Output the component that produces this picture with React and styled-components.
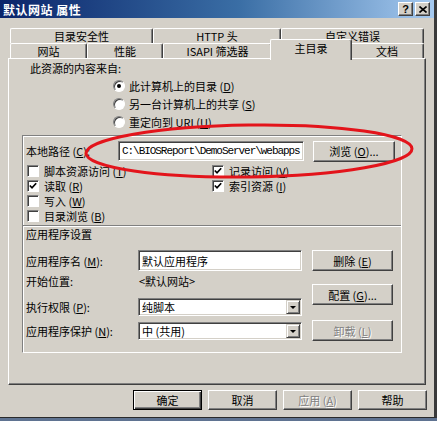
import React from 'react';
import styled, { createGlobalStyle } from 'styled-components';

const GlobalStyle = createGlobalStyle`
  html, body { margin:0; padding:0; background:#5f7391; }
  body {
    font-family: "Noto Sans CJK SC", "Liberation Sans", sans-serif;
    font-size:11px;
    color:#000;
  }
  * { box-sizing:border-box; }
`

const Window = styled.div`
  position:relative;
  width:437px;
  height:418px;
  background:#d4d0c8;
  border-right:3px solid #3a3a3a;
  border-bottom:1px solid #2a2a2a;
  display:flex;
  flex-direction:column;
`

const TitleBar = styled.div`
  height:18px;
  display:flex;
  align-items:center;
  justify-content:space-between;
  padding:0 4px 0 3px;
  background:linear-gradient(90deg, #0a246a 0%, #3a6ea5 55%, #a6caf0 100%);
`

const TitleText = styled.div`
  color:#fff;
  font-weight:bold;
  font-size:12px;
  letter-spacing:0.5px;
`

const TitleButtons = styled.div`
  display:flex;
  gap:2px;
`

const CaptionButton = styled.div`
  width:15px;
  height:14px;
  background:#d4d0c8;
  border:1px solid;
  border-color:#fff #404040 #404040 #fff;
  box-shadow:inset -1px -1px #808080;
  display:flex;
  align-items:center;
  justify-content:center;
  font-family:"Liberation Sans", sans-serif;
  font-weight:bold;
  font-size:11px;
  line-height:1;
`

const Body = styled.div`
  flex:1;
  display:flex;
  flex-direction:column;
  padding:10px 8px 0 8px;
`

const TabStrip = styled.div`
  display:flex;
  flex-direction:column;
  padding:0 2px;
`

const TabRow = styled.div`
  display:flex;
  align-items:flex-start;
  height:15px;
`

const Tab = styled.div`
  width:${p => p.w}px;
  height:${p => (p.active ? 21 : 15)}px;
  margin:${p => (p.active ? '-4px -2px -2px -2px' : '0')};
  position:relative;
  z-index:${p => (p.active ? 2 : 1)};
  background:#d4d0c8;
  border-top:1px solid #fff;
  border-left:1px solid #fff;
  border-right:1px solid #404040;
  box-shadow:inset -1px 0 #808080;
  border-radius:2px 2px 0 0;
  display:flex;
  align-items:${p => (p.active ? 'flex-start' : 'center')};
  padding-top:${p => (p.active ? '2px' : '0')};
  justify-content:center;
  white-space:nowrap;
  line-height:13px;
`

const Panel = styled.div`
  height:327px;
  border:1px solid;
  border-color:#fff #404040 #404040 #fff;
  box-shadow:inset -1px -1px #808080;
  padding:2px 0 0 0;
  display:flex;
  flex-direction:column;
`

const Caption = styled.div`
  height:14px;
  line-height:14px;
  padding-left:${p => p.indent || 0}px;
  white-space:nowrap;
`

const RadioList = styled.div`
  display:flex;
  flex-direction:column;
  margin:2px 0 0 104px;
`

const OptionRow = styled.div`
  height:${p => p.h || 18}px;
  display:flex;
  align-items:center;
  gap:${p => p.gap || 4}px;
  white-space:nowrap;
`

const RadioDot = styled.div`
  width:12px;
  height:12px;
  border-radius:50%;
  background:#fff;
  border:1px solid;
  border-color:#808080 #fff #fff #808080;
  box-shadow:inset 1px 1px #404040;
  display:flex;
  align-items:center;
  justify-content:center;
  &::after {
    content:'';
    width:4px;
    height:4px;
    border-radius:50%;
    background:${p => (p.on ? '#000' : 'transparent')};
  }
`

const GroupBox = styled.div`
  margin:4px 0 0 13px;
  width:380px;
  height:218px;
  border:1px solid;
  border-color:#808080 #fff #fff #808080;
  box-shadow:inset 1px 1px #fff, 1px 1px #808080 inset;
  outline:none;
  display:flex;
  flex-direction:column;
`

const Section = styled.div`
  padding:${p => p.pad};
  display:flex;
  flex-direction:column;
`

const Divider = styled.div`
  height:2px;
  border-top:1px solid #808080;
  border-bottom:1px solid #fff;
`

const PathRow = styled.div`
  display:flex;
  align-items:center;
  height:22px;
`

const Label = styled.div`
  width:${p => p.w}px;
  flex:none;
  white-space:nowrap;
`

const Field = styled.div`
  width:${p => p.w}px;
  height:${p => p.h || 20}px;
  background:#fff;
  border:1px solid;
  border-color:#808080 #fff #fff #808080;
  box-shadow:inset 1px 1px #404040, inset -1px -1px #d4d0c8;
  display:flex;
  align-items:center;
  padding:0 2px 0 3px;
  white-space:nowrap;
  overflow:hidden;
  font-family:${p => (p.mono ? '"Liberation Mono", monospace' : 'inherit')};
  font-size:${p => (p.mono ? '11px' : '11px')};
  letter-spacing:${p => (p.mono ? '-1.05px' : '0')};
`

const DropArrow = styled.div`
  margin-left:auto;
  width:14px;
  height:14px;
  flex:none;
  background:#d4d0c8;
  border:1px solid;
  border-color:#d4d0c8 #404040 #404040 #d4d0c8;
  box-shadow:inset 1px 1px #fff, inset -1px -1px #808080;
  display:flex;
  align-items:center;
  justify-content:center;
  margin-right:-1px;
  &::after {
    content:'';
    border-left:3px solid transparent;
    border-right:3px solid transparent;
    border-top:3px solid #000;
  }
`

const Button = styled.div`
  width:${p => p.w}px;
  height:${p => p.h || 21}px;
  flex:none;
  background:#d4d0c8;
  border:1px solid;
  border-color:${p => (p.primary ? '#000' : '#fff #404040 #404040 #fff')};
  box-shadow:${p => (p.primary
    ? 'inset 1px 1px #fff, inset -1px -1px #404040, inset -2px -2px #808080'
    : 'inset -1px -1px #808080')};
  display:flex;
  align-items:center;
  justify-content:center;
  white-space:nowrap;
  color:${p => (p.disabled ? '#808080' : '#000')};
  text-shadow:${p => (p.disabled ? '1px 1px #fff' : 'none')};
`

const CheckColumns = styled.div`
  display:flex;
  margin:1px 0 2px 1px;
`

const CheckColumn = styled.div`
  width:${p => p.w}px;
  display:flex;
  flex-direction:column;
`

const Box = styled.div`
  width:12px;
  height:12px;
  flex:none;
  background:#fff;
  border:1px solid;
  border-color:#808080 #fff #fff #808080;
  box-shadow:inset 1px 1px #404040;
  display:flex;
  align-items:center;
  justify-content:center;
`

const FormArea = styled.div`
  display:flex;
  margin-top:9px;
  gap:10px;
`

const FormGrid = styled.div`
  display:flex;
  flex-direction:column;
`

const FormRow = styled.div`
  display:flex;
  align-items:center;
  height:${p => p.h}px;
  margin-top:${p => p.mt || 0}px;
`

const ButtonStack = styled.div`
  display:flex;
  flex-direction:column;
  gap:${p => p.gap}px;
`

const Footer = styled.div`
  display:flex;
  gap:6px;
  padding-left:125px;
  margin-top:5px;
`

const Ring = styled.svg`
  position:absolute;
  left:82px;
  top:121px;
  pointer-events:none;
`

const U = styled.span`
  text-decoration:underline;
`

function Check({ on }) {
  return (
    <Box>
      {on && (
        <svg width="8" height="8" viewBox="0 0 8 8">
          <polyline points="0.8,3.5 3,5.8 7.2,1.2" fill="none" stroke="#000" strokeWidth="1.7" />
        </svg>
      )}
    </Box>
  );
}

const row1 = [
  { label: '目录安全性', w: 143 },
  { label: 'HTTP 头', w: 128 },
  { label: '自定义错误', w: 143 },
];
const row2 = [
  { label: '网站', w: 77 },
  { label: '性能', w: 76 },
  { label: 'ISAPI 筛选器', w: 109 },
  { label: '主目录', w: 82, active: true },
  { label: '文档', w: 74 },
];

export default function App() {
  return (
    <>
      <GlobalStyle />
      <Window>
        <TitleBar>
          <TitleText>默认网站 属性</TitleText>
          <TitleButtons>
            <CaptionButton>?</CaptionButton>
            <CaptionButton>
              <svg width="8" height="7" viewBox="0 0 8 7">
                <path d="M0.5 0.5 L7.5 6.5 M7.5 0.5 L0.5 6.5" stroke="#000" strokeWidth="1.6" />
              </svg>
            </CaptionButton>
          </TitleButtons>
        </TitleBar>

        <Body>
          <TabStrip>
            <TabRow>
              {row1.map(t => <Tab key={t.label} w={t.w}>{t.label}</Tab>)}
            </TabRow>
            <TabRow>
              {row2.map(t => <Tab key={t.label} w={t.w} active={t.active}>{t.label}</Tab>)}
            </TabRow>
          </TabStrip>

          <Panel>
            <Caption indent={21}>此资源的内容来自:</Caption>
            <RadioList>
              <OptionRow><RadioDot on /><span>此计算机上的目录 (<U>D</U>)</span></OptionRow>
              <OptionRow><RadioDot /><span>另一台计算机上的共享 (<U>S</U>)</span></OptionRow>
              <OptionRow><RadioDot /><span>重定向到 URL(<U>U</U>)</span></OptionRow>
            </RadioList>

            <GroupBox>
              <Section pad="4px 0 0 3px">
                <PathRow>
                  <Label w={92}>本地路径 (<U>C</U>):</Label>
                  <Field w={186} mono>C:\BIOSReport\DemoServer\webapps</Field>
                  <Button w={82} style={{ marginLeft: 9 }}>浏览 (<U>O</U>)...</Button>
                </PathRow>
                <CheckColumns>
                  <CheckColumn w={185}>
                    <OptionRow h={15} gap={5}><Check /><span>脚本资源访问 (<U>T</U>)</span></OptionRow>
                    <OptionRow h={15} gap={5}><Check on /><span>读取 (<U>R</U>)</span></OptionRow>
                    <OptionRow h={15} gap={5}><Check /><span>写入 (<U>W</U>)</span></OptionRow>
                    <OptionRow h={15} gap={5}><Check /><span>目录浏览 (<U>B</U>)</span></OptionRow>
                  </CheckColumn>
                  <CheckColumn w={170}>
                    <OptionRow h={15} gap={5}><Check on /><span>记录访问 (<U>V</U>)</span></OptionRow>
                    <OptionRow h={15} gap={5}><Check on /><span>索引资源 (<U>I</U>)</span></OptionRow>
                  </CheckColumn>
                </CheckColumns>
              </Section>
              <Divider />
              <Section pad="0 0 0 3px">
                <Caption>应用程序设置</Caption>
                <FormArea>
                  <FormGrid>
                    <FormRow h={21}>
                      <Label w={112}>应用程序名 (<U>M</U>):</Label>
                      <Field w={164} h={21}>默认应用程序</Field>
                    </FormRow>
                    <FormRow h={16} mt={2}>
                      <Label w={113}>开始位置:</Label>
                      <span>&lt;默认网站&gt;</span>
                    </FormRow>
                    <FormRow h={18} mt={9}>
                      <Label w={112}>执行权限 (<U>P</U>):</Label>
                      <Field w={164} h={18}>纯脚本<DropArrow /></Field>
                    </FormRow>
                    <FormRow h={18} mt={6}>
                      <Label w={112}>应用程序保护 (<U>N</U>):</Label>
                      <Field w={164} h={18}>中 (共用)<DropArrow /></Field>
                    </FormRow>
                  </FormGrid>
                  <ButtonStack gap={13}>
                    <Button w={81}>删除 (<U>E</U>)</Button>
                    <Button w={81}>配置 (<U>G</U>)...</Button>
                    <Button w={81} disabled style={{ marginTop: 2 }}>卸载 (<U>L</U>)</Button>
                  </ButtonStack>
                </FormArea>
              </Section>
            </GroupBox>
          </Panel>

          <Footer>
            <Button w={69} h={20} primary>确定</Button>
            <Button w={69} h={20}>取消</Button>
            <Button w={69} h={20} disabled>应用 (<U>A</U>)</Button>
            <Button w={69} h={20}>帮助</Button>
          </Footer>
        </Body>

        <Ring width="336" height="62" viewBox="0 0 336 62">
          <ellipse cx="167" cy="30" rx="163" ry="26" fill="none" stroke="#e3141b" strokeWidth="3"
            transform="rotate(-0.8 167 30)" />
        </Ring>
      </Window>
    </>
  );
}
